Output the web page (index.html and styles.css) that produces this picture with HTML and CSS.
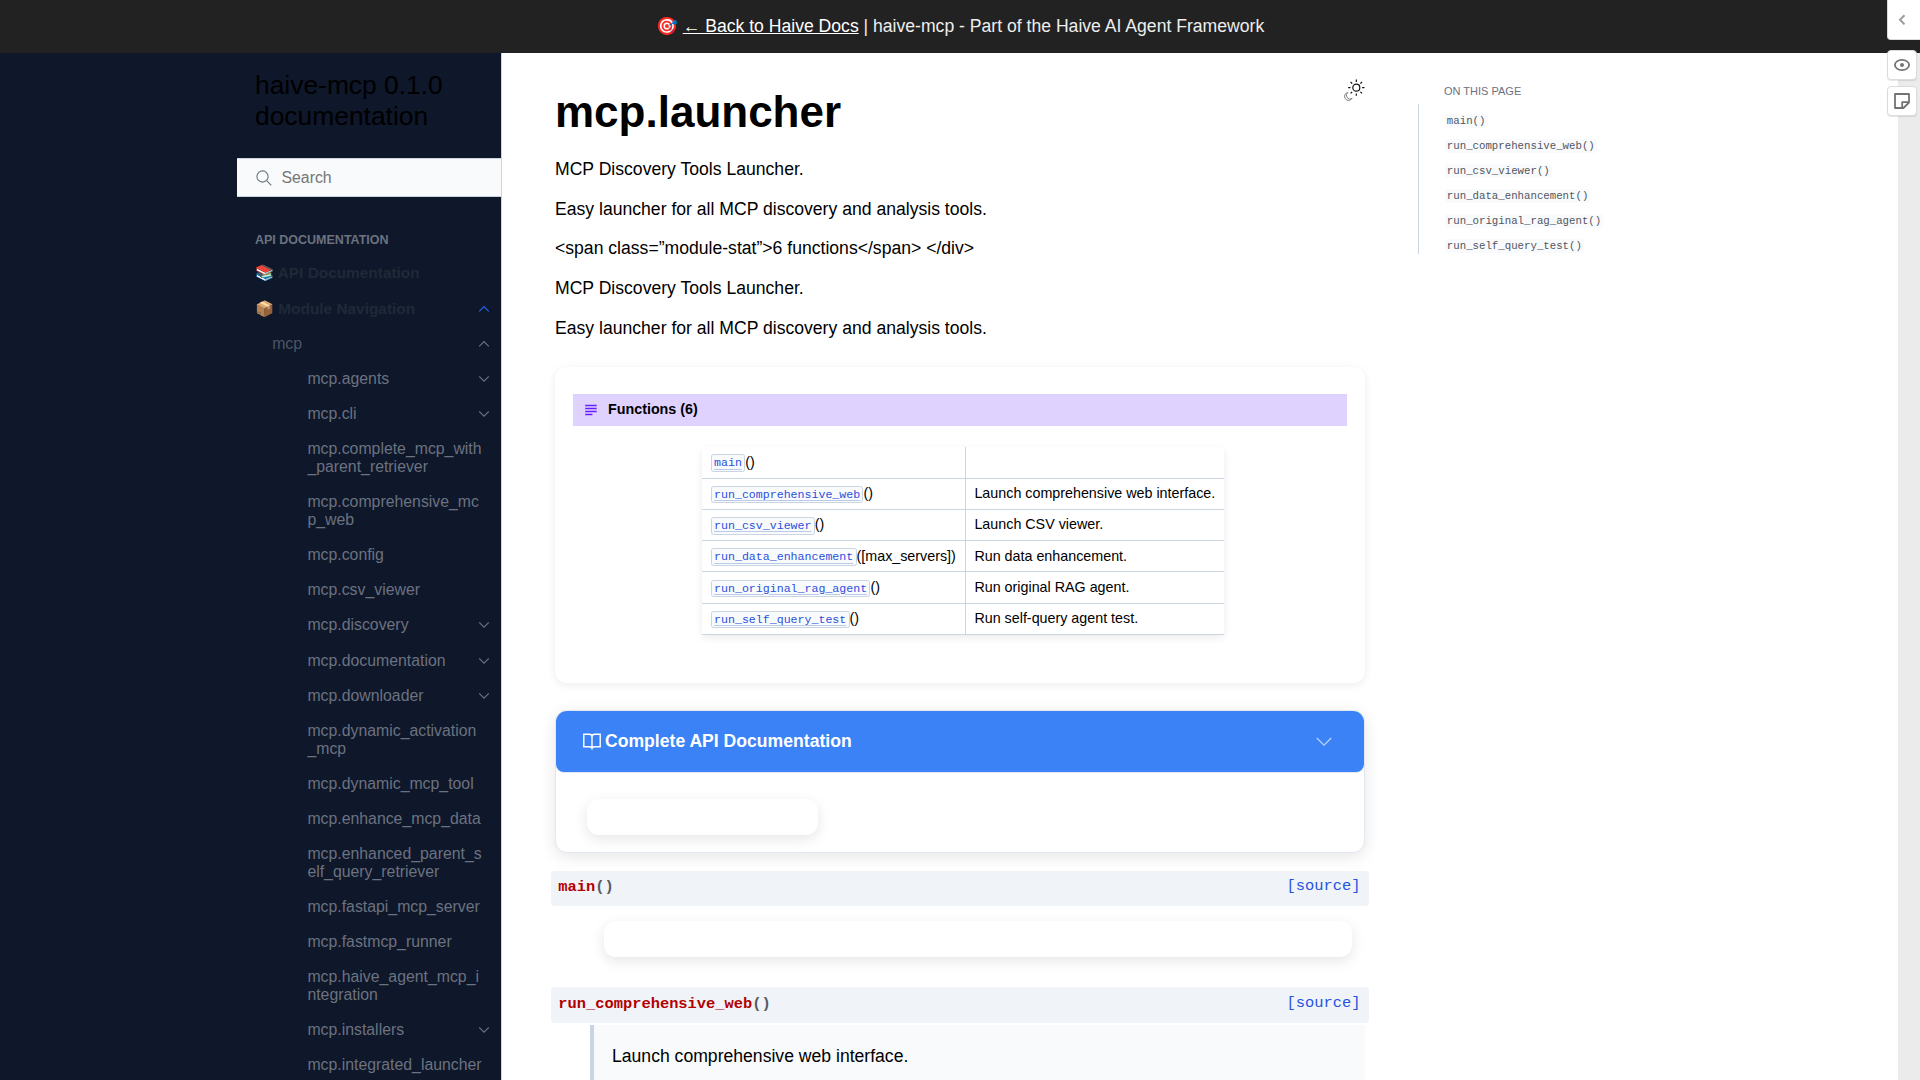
FILE: index.html
```html
<!DOCTYPE html>
<html lang="en">
<head>
<meta charset="utf-8">
<title>mcp.launcher</title>
<link rel="stylesheet" href="styles.css">
</head>
<body>
<svg class="defs" width="0" height="0">
  <symbol id="down" viewBox="0 0 12 8"><path d="M1.2 1.4 6 6.2l4.800-4.800" fill="none" stroke="currentColor" stroke-width="1.200"/></symbol>
  <symbol id="up" viewBox="0 0 12 8"><path d="M1.2 6.400 6 1.600l4.800 4.800" fill="none" stroke="currentColor" stroke-width="1.200"/></symbol>
</svg>
<header class="announcement">🎯 <a href="#">← Back to Haive Docs</a> | haive-mcp - Part of the Haive AI Agent Framework</header>
<div class="page">
  <aside class="sidebar">
    <div class="sidebar-inner">
      <a class="brand">haive-mcp 0.1.0 documentation</a>
      <div class="search">
        <svg width="16" height="16" viewBox="0 0 16 16" fill="none" stroke="#6b7280" stroke-width="1.100"><circle cx="6.500" cy="6.500" r="5.600"/><path d="m10.600 10.600 4.700 4.700"/></svg>
        <span>Search</span>
      </div>
      <nav class="tree">
        <p class="caption">API Documentation</p>
        <div class="item top"><span>📚 API Documentation</span></div>
        <div class="item top open"><span>📦 Module Navigation</span><svg class="blue"><use href="#up"/></svg></div>
        <div class="item l2"><span>mcp</span><svg><use href="#up"/></svg></div>
        <div class="item"><span>mcp.agents</span><svg><use href="#down"/></svg></div>
        <div class="item"><span>mcp.cli</span><svg><use href="#down"/></svg></div>
        <div class="item"><span>mcp.complete_mcp_with<br>_parent_retriever</span></div>
        <div class="item"><span>mcp.comprehensive_mc<br>p_web</span></div>
        <div class="item"><span>mcp.config</span></div>
        <div class="item"><span>mcp.csv_viewer</span></div>
        <div class="item"><span>mcp.discovery</span><svg><use href="#down"/></svg></div>
        <div class="item"><span>mcp.documentation</span><svg><use href="#down"/></svg></div>
        <div class="item"><span>mcp.downloader</span><svg><use href="#down"/></svg></div>
        <div class="item"><span>mcp.dynamic_activation<br>_mcp</span></div>
        <div class="item"><span>mcp.dynamic_mcp_tool</span></div>
        <div class="item"><span>mcp.enhance_mcp_data</span></div>
        <div class="item"><span>mcp.enhanced_parent_s<br>elf_query_retriever</span></div>
        <div class="item"><span>mcp.fastapi_mcp_server</span></div>
        <div class="item"><span>mcp.fastmcp_runner</span></div>
        <div class="item"><span>mcp.haive_agent_mcp_i<br>ntegration</span></div>
        <div class="item"><span>mcp.installers</span><svg><use href="#down"/></svg></div>
        <div class="item"><span>mcp.integrated_launcher</span></div>
      </nav>
    </div>
  </aside>
  <main class="content">
    <svg class="theme" width="22" height="23" viewBox="0 0 22 23" fill="none" stroke="#111" stroke-width="1.200">
      <circle cx="13.300" cy="8.700" r="3.500"/>
      <path d="M13.300.6v2.300M13.300 14.500v2.300M5.200 8.700h2.300M19.100 8.700h2.300M7.600 3l1.600 1.600M17.400 12.800 19 14.400M19 3l-1.600 1.600M9.200 12.800l-1.600 1.600"/>
      <path d="M4.800 13.500a4 4 0 1 0 4.300 5.800 3.500 3.500 0 0 1-4.300-5.800z" stroke="#777" stroke-width=".9"/>
    </svg>
    <h1>mcp.launcher</h1>
    <p>MCP Discovery Tools Launcher.</p>
    <p>Easy launcher for all MCP discovery and analysis tools.</p>
    <p>&lt;span class=”module-stat”&gt;6 functions&lt;/span&gt; &lt;/div&gt;</p>
    <p>MCP Discovery Tools Launcher.</p>
    <p>Easy launcher for all MCP discovery and analysis tools.</p>
    <section class="summary">
      <div class="rubric"><svg width="12" height="12" viewBox="0 0 12 12"><path fill="#c4a6ff" d="M0 0h12v9H7.500v3H0z"/><path fill="none" stroke="#651fff" d="M.3 1.500h11.200M.3 4.500h11.200M.3 7.500h11.200M.3 10.500h7"/></svg><span>Functions (6)</span></div>
      <table>
        <tr><td><a><code>main</code></a>()</td><td></td></tr>
        <tr><td><a><code>run_comprehensive_web</code></a>()</td><td>Launch comprehensive web interface.</td></tr>
        <tr><td><a><code>run_csv_viewer</code></a>()</td><td>Launch CSV viewer.</td></tr>
        <tr><td><a><code>run_data_enhancement</code></a>([max_servers])</td><td>Run data enhancement.</td></tr>
        <tr><td><a><code>run_original_rag_agent</code></a>()</td><td>Run original RAG agent.</td></tr>
        <tr><td><a><code>run_self_query_test</code></a>()</td><td>Run self-query agent test.</td></tr>
      </table>
    </section>
    <section class="dropdown">
      <div class="dropdown-title">
        <svg width="18" height="17" viewBox="0 0 18 17" fill="none" stroke="#fff" stroke-width="1.400"><path d="M9 14.800c-.8-.9-1.600-1.100-2.800-1.100H.8V1.300h5.400C8 1.300 9 2.300 9 3.900zM9 14.800c.8-.9 1.600-1.100 2.800-1.100h5.400V1.300h-5.400C10 1.300 9 2.300 9 3.900M9 14v2.500"/></svg>
        <span>Complete API Documentation</span>
        <svg class="caret" width="16" height="10" viewBox="0 0 16 10" fill="none" stroke="#b9d3fd" stroke-width="1.300"><path d="m.8 1 7.200 7.200L15.200 1"/></svg>
      </div>
      <div class="pill short"></div>
    </section>
    <div class="signature"><b>main<i>()</i></b><a>[source]</a></div>
    <div class="pill long"></div>
    <div class="signature second"><b>run_comprehensive_web<i>()</i></b><a>[source]</a></div>
    <div class="description">Launch comprehensive web interface.</div>
  </main>
  <aside class="toc">
    <div class="toc-title">ON THIS PAGE</div>
    <div class="toc-list">
      <div><code>main()</code></div>
      <div><code>run_comprehensive_web()</code></div>
      <div><code>run_csv_viewer()</code></div>
      <div><code>run_data_enhancement()</code></div>
      <div><code>run_original_rag_agent()</code></div>
      <div><code>run_self_query_test()</code></div>
    </div>
  </aside>
</div>
<div class="annotator">
  <div class="strip"></div>
  <div class="tab"><svg width="8" height="12" viewBox="0 0 8 12" fill="none" stroke="#9c9c9c" stroke-width="2"><path d="M6.500 1.200 2 5.800l4.500 4.600"/></svg></div>
  <div class="tool"><svg width="16" height="12" viewBox="0 0 16 12" fill="none" stroke="#737373" stroke-width="1.800"><ellipse cx="8" cy="6" rx="7.100" ry="5.100"/><circle cx="8" cy="6" r="2" fill="#737373" stroke="none"/></svg></div>
  <div class="tool note"><svg width="16" height="16" viewBox="0 0 16 16" fill="none" stroke="#737373" stroke-width="1.800" stroke-linejoin="round"><path d="M1 1h14v8.500L9.500 15H1zM15 9.200H8.200V15"/></svg></div>
</div>
</body>
</html>
```
FILE: styles.css
```css
html { font-size: 17.6px; }
* { box-sizing: border-box; }
body {
  margin: 0;
  height: 1080px;
  overflow: hidden;
  position: relative;
  background: #fff;
  color: #000;
  font-family: "Liberation Sans", Arial, sans-serif;
  line-height: 1.5;
}
code, .signature { font-family: "Liberation Mono", "Courier New", monospace; }
.defs { position: absolute; }

.announcement {
  height: 53px;
  padding-top: 12.500px;
  background: #222;
  color: #eee;
  text-align: center;
}
.announcement a { color: #fff; text-underline-offset: auto; }

.page { display: flex; height: 1027px; }

.sidebar {
  width: 502px;
  flex: none;
  display: flex;
  justify-content: flex-end;
  background: #0f172a;
  border-right: 1px solid #cbd5e1;
}
.sidebar-inner { width: 264px; }
.brand {
  display: block;
  padding: 17px 18px 0;
  height: 105px;
  font-size: 1.5rem;
  line-height: 31px;
}
.search {
  height: 39px;
  display: flex;
  align-items: center;
  gap: 9.500px;
  padding-left: 19px;
  background: #f8fafc;
  border: solid #cbd5e1;
  border-width: 1px 0;
  color: #757575;
  font-size: 0.9rem;
}
.search span { padding-top: 1px; }
.caption {
  margin: 33px 0 5px;
  padding-left: 18px;
  color: #6b7280;
  font-size: 12.500px;
  font-weight: bold;
  line-height: 20px;
  text-transform: uppercase;
}
.item {
  display: flex;
  justify-content: space-between;
  padding: 8.800px 11px 8.800px 70.400px;
  color: #6b7280;
  font-size: 0.9rem;
  line-height: 17.600px;
  white-space: nowrap;
}
.item svg { width: 12px; height: 8px; margin-top: 5px; flex: none; }
.item.top { padding-left: 18px; color: #1f2937; font-weight: bold; font-size: 15.400px; }
.item.open { margin-top: 0.700px; }
.item.l2 { padding-left: 35.200px; color: #4b5563; }
.item.l2 svg { color: #6b7280; }
.item .blue { color: #2563eb; }

.content {
  width: 916px;
  flex: none;
  padding: 30.800px 53px 0;
  position: relative;
}
.theme { position: absolute; left: 841px; top: 26px; }
h1 { margin: 0 0 17.400px; font-size: 2.500rem; line-height: 55px; }
p { margin: 0 0 13.200px; }

.summary {
  height: 316px;
  margin-top: 25.700px;
  padding: 27px 18px;
  background: #fff;
  border-radius: 12px;
  box-shadow: 0 2px 8px rgba(0, 0, 0, 0.08);
}
.rubric {
  display: flex;
  align-items: center;
  gap: 11px;
  height: 32px;
  padding-left: 12px;
  background: #dfd2ff;
  font-size: 14.300px;
  font-weight: bold;
}
.rubric span { padding-top: 1px; }
table {
  margin: 21.400px auto 0;
  transform: translateX(3px);
  border-collapse: collapse;
  font-size: 14.300px;
  border-radius: 4px;
  box-shadow: 0 3px 8px rgba(0, 0, 0, 0.08);
}
td { padding: 4.400px 8.800px; height: 31.250px; border-bottom: 1px solid #cbd5e1; }
td:first-child { border-right: 1px solid #cbd5e1; }
td code {
  padding: 0.100em 0.200em;
  background: #f8fafc;
  border: 1px solid #cbd5e1;
  border-radius: 2.400px;
  font-size: 11.600px;
}
td a { color: #2b50dc; text-decoration: underline #b9cbe8; text-underline-offset: 2px; }

.dropdown {
  margin-top: 27px;
  height: 143px;
  background: #fff;
  border: 1px solid #e2e8f0;
  border-radius: 12px;
  box-shadow: 0 4px 16px rgba(0, 0, 0, 0.1);
}
.dropdown-title {
  display: flex;
  align-items: center;
  height: 61px;
  padding: 0 32px 0 27px;
  background: #3b82f6;
  border-radius: 11px 11px 8px 8px;
  box-shadow: 0 1px #e2e8f0;
  color: #fff;
  font-weight: bold;
}
.dropdown-title svg { margin-top: 1px; }
.dropdown-title span { margin-left: 4px; }
.dropdown-title .caret { margin-left: auto; }
.pill {
  height: 36px;
  background: #fff;
  border-radius: 12px;
  box-shadow: 0 4px 14px rgba(0, 0, 0, 0.1);
}
.short { width: 231px; margin: 27px 0 0 31px; }
.long { margin: 15px 13px 0 49px; }

.signature {
  display: flex;
  justify-content: space-between;
  height: 35px;
  margin: 18px -4px 0;
  padding: 4px 8.500px 4px 7.300px;
  background: #f0f3f8;
  border-radius: 4px;
  font-size: 15.400px;
  line-height: 23px;
}
.signature b { color: #b30000; padding-top: 1px; }
.signature i { color: #555b66; font-style: normal; }
.signature a { color: #2554e0; }
.signature.second { height: 36px; margin-top: 30px; padding-top: 5px; }
.description {
  margin: 2px 0 0 35px;
  height: 80px;
  padding: 18px 18px;
  background: #f8fafc;
  border-left: 4px solid #cbd5e1;
}

.toc { padding-top: 29px; color: #52565e; }
.toc-title { padding-left: 26px; height: 22px; font-size: 11px; line-height: 18px; color: #6b7280; }
.toc-list {
  height: 150px;
  display: grid;
  grid-template-rows: repeat(6, 25px);
  padding: 3px 0 0 25.700px;
  border-left: 1px solid #cbd5e1;
  font-size: 13.200px;
  line-height: 25px;
}
.toc-list code {
  padding: 0.100em 0.200em;
  background: #f8fafc;
  border-radius: 2.400px;
  font-size: 10.725px;
}

.annotator { position: absolute; top: 0; right: 0; width: 33px; height: 1080px; }
.strip { position: absolute; top: 53px; right: 0; bottom: 0; width: 22px; background: #ebebeb; }
.tab, .tool {
  position: relative;
  display: grid;
  place-items: center;
  background: #fff;
  border: 1px solid #dbdbdb;
}
.tab { height: 40px; border-width: 0 0 1px 1px; border-radius: 0 0 0 4px; padding-right: 4px; }
.tool { width: 30px; height: 30px; margin-top: 10px; border-radius: 4px; box-shadow: 0 1px 1px rgba(0, 0, 0, 0.1); }
.tool.note { margin-top: 6px; }
```
